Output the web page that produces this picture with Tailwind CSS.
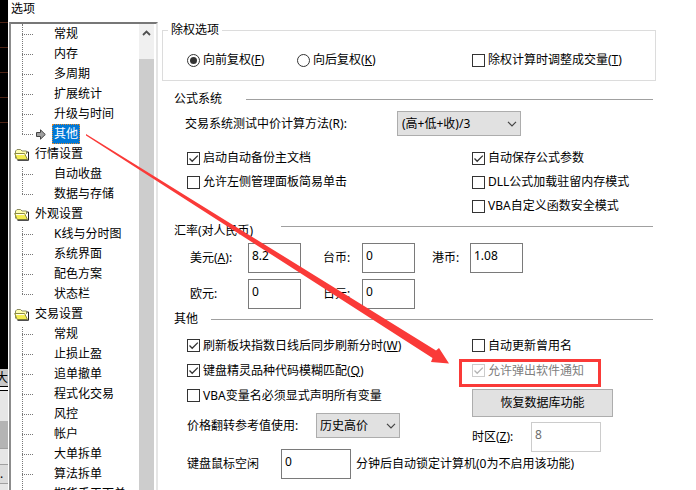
<!DOCTYPE html>
<html lang="zh-CN">
<head>
    <meta charset="UTF-8">
    <meta name="viewport" content="width=device-width, initial-scale=1.0">
    <title>选项</title>
    <!-- Tailwind CSS CDN -->
    <script src="https://cdn.jsdelivr.net/npm/@tailwindcss/browser@4"></script>
    <style>
        body {
            font-family: 'Noto Sans', 'Noto Sans CJK SC', sans-serif;
        }
    </style>
</head>
<body class="bg-white text-black text-[12px] leading-[18px] antialiased">

    <!-- Shared icons -->
    <svg class="hidden">
        <symbol id="check" viewBox="0 0 13 13">
            <path d="M2.5 6.5 5.2 9.3 10.8 3.6" fill="none" stroke="currentColor" stroke-width="1.3"/>
        </symbol>
        <symbol id="chevron" viewBox="0 0 10 6">
            <path d="M1 .8 5 4.8 9 .8" fill="none" stroke="#444" stroke-width="1.2"/>
        </symbol>
        <symbol id="folder" viewBox="0 0 16 13">
            <path d="M1.500 10.500V3L3 1.500H6.500L8 3H12.500V6" fill="#ffffb0" stroke="#8c8c60"/>
            <path d="M.7 5.500H10.500L13.500 11.500H3.200Z" fill="#f5ee50" stroke="#8c8c40"/>
            <path d="M3.500 12.300H14.500V4H13" fill="none" stroke="#222"/>
            <path d="M2 6.500H10.400" stroke="#fffff0"/>
        </symbol>
        <symbol id="pointer" viewBox="0 0 10 11">
            <path d="M.5 3.500H4.500V.8L9.300 5.500 4.500 10.200V7.500H.5Z" fill="#a0a0a0" stroke="#444"/>
        </symbol>
    </svg>

    <div class="relative flex h-screen overflow-hidden">

        <!-- Window behind the dialog -->
        <div class="w-2 shrink-0 flex flex-col overflow-hidden bg-black">
            <div class="h-[369px] shrink-0 pt-[22px] flex flex-col gap-6">
                <div class="h-px bg-[#4d2416]"></div>
                <div class="h-px bg-[#4d2416]"></div>
                <div class="h-px bg-[#4d2416]"></div>
                <div class="h-px bg-[#4d2416]"></div>
                <div class="h-px bg-[#4d2416]"></div>
            </div>
            <div class="h-[17px] shrink-0 bg-[#c8c8c8] flex justify-end"><span>大</span></div>
            <div class="h-[5px] shrink-0 border-y border-black bg-white"></div>
            <div class="h-[30px] shrink-0 bg-[#e6e6e6]"></div>
            <div class="h-[27px] shrink-0 bg-[#b4b4b4]"></div>
            <div class="h-[17px] shrink-0 border-y border-[#a0a0a0] bg-[#e6e6e6]"></div>
            <div class="h-[19px] shrink-0 border-b border-[#a0a0a0] bg-[#dcdcdc]">.</div>
            <div class="grow bg-[#e6e6e6]"></div>
        </div>

        <!-- Options dialog -->
        <div class="grow min-w-0 flex flex-col bg-white pl-px">
            <h1 class="h-[22px] shrink-0 pl-[2px]">选项</h1>

            <div class="grow min-h-0 flex">

                <!-- Category tree -->
                <nav class="w-[149px] shrink-0 flex border-t-2 border-l-2 border-r-2 border-t-[#777] border-l-[#8c8c8c] border-r-[#e6e6e6] overflow-hidden">
                    <ul class="grow">
                        <li>
                            <ul class="relative ml-[11px] before:absolute before:left-0 before:top-0 before:bottom-[10px] before:border-l before:border-dotted before:border-[#777]">
                                <li class="h-5 flex items-center"><i class="w-[11px] border-t border-dotted border-[#777]"></i><a href="#" class="ml-[21px]">常规</a></li>
                                <li class="h-5 flex items-center"><i class="w-[11px] border-t border-dotted border-[#777]"></i><a href="#" class="ml-[21px]">内存</a></li>
                                <li class="h-5 flex items-center"><i class="w-[11px] border-t border-dotted border-[#777]"></i><a href="#" class="ml-[21px]">多周期</a></li>
                                <li class="h-5 flex items-center"><i class="w-[11px] border-t border-dotted border-[#777]"></i><a href="#" class="ml-[21px]">扩展统计</a></li>
                                <li class="h-5 flex items-center"><i class="w-[11px] border-t border-dotted border-[#777]"></i><a href="#" class="ml-[21px]">升级与时间</a></li>
                                <li class="h-5 flex items-center">
                                    <i class="w-[11px] border-t border-dotted border-[#777]"></i>
                                    <svg class="ml-[3px] w-[10px] h-[11px]"><use href="#pointer"/></svg>
                                    <a href="#" class="ml-[6px] px-px h-5 border border-dotted border-[#e08a30] bg-[#0078d7] text-white" aria-current="page">其他</a>
                                </li>
                            </ul>
                        </li>
                        <li>
                            <div class="h-5 flex items-center gap-[5px] pl-[3px]"><svg class="w-4 h-[13px]"><use href="#folder"/></svg><a href="#">行情设置</a></div>
                            <ul class="relative ml-[11px] before:absolute before:left-0 before:top-[3px] before:bottom-[10px] before:border-l before:border-dotted before:border-[#777]">
                                <li class="h-5 flex items-center"><i class="w-[11px] border-t border-dotted border-[#777]"></i><a href="#" class="ml-[21px]">自动收盘</a></li>
                                <li class="h-5 flex items-center"><i class="w-[11px] border-t border-dotted border-[#777]"></i><a href="#" class="ml-[21px]">数据与存储</a></li>
                            </ul>
                        </li>
                        <li>
                            <div class="h-5 flex items-center gap-[5px] pl-[3px]"><svg class="w-4 h-[13px]"><use href="#folder"/></svg><a href="#">外观设置</a></div>
                            <ul class="relative ml-[11px] before:absolute before:left-0 before:top-[3px] before:bottom-[10px] before:border-l before:border-dotted before:border-[#777]">
                                <li class="h-5 flex items-center"><i class="w-[11px] border-t border-dotted border-[#777]"></i><a href="#" class="ml-[21px]">K线与分时图</a></li>
                                <li class="h-5 flex items-center"><i class="w-[11px] border-t border-dotted border-[#777]"></i><a href="#" class="ml-[21px]">系统界面</a></li>
                                <li class="h-5 flex items-center"><i class="w-[11px] border-t border-dotted border-[#777]"></i><a href="#" class="ml-[21px]">配色方案</a></li>
                                <li class="h-5 flex items-center"><i class="w-[11px] border-t border-dotted border-[#777]"></i><a href="#" class="ml-[21px]">状态栏</a></li>
                            </ul>
                        </li>
                        <li>
                            <div class="h-5 flex items-center gap-[5px] pl-[3px]"><svg class="w-4 h-[13px]"><use href="#folder"/></svg><a href="#">交易设置</a></div>
                            <ul class="relative ml-[11px] before:absolute before:left-0 before:top-[3px] before:bottom-[10px] before:border-l before:border-dotted before:border-[#777]">
                                <li class="h-5 flex items-center"><i class="w-[11px] border-t border-dotted border-[#777]"></i><a href="#" class="ml-[21px]">常规</a></li>
                                <li class="h-5 flex items-center"><i class="w-[11px] border-t border-dotted border-[#777]"></i><a href="#" class="ml-[21px]">止损止盈</a></li>
                                <li class="h-5 flex items-center"><i class="w-[11px] border-t border-dotted border-[#777]"></i><a href="#" class="ml-[21px]">追单撤单</a></li>
                                <li class="h-5 flex items-center"><i class="w-[11px] border-t border-dotted border-[#777]"></i><a href="#" class="ml-[21px]">程式化交易</a></li>
                                <li class="h-5 flex items-center"><i class="w-[11px] border-t border-dotted border-[#777]"></i><a href="#" class="ml-[21px]">风控</a></li>
                                <li class="h-5 flex items-center"><i class="w-[11px] border-t border-dotted border-[#777]"></i><a href="#" class="ml-[21px]">帐户</a></li>
                                <li class="h-5 flex items-center"><i class="w-[11px] border-t border-dotted border-[#777]"></i><a href="#" class="ml-[21px]">大单拆单</a></li>
                                <li class="h-5 flex items-center"><i class="w-[11px] border-t border-dotted border-[#777]"></i><a href="#" class="ml-[21px]">算法拆单</a></li>
                                <li class="h-5 flex items-center"><i class="w-[11px] border-t border-dotted border-[#777]"></i><a href="#" class="ml-[21px]">期货手工下单</a></li>
                            </ul>
                        </li>
                    </ul>
                    <!-- Scrollbar -->
                    <div class="w-[15px] mr-[2px] shrink-0 flex flex-col bg-[#f0f0f0]">
                        <button type="button" aria-label="向上滚动" class="h-[35px] shrink-0 flex justify-center pt-[6px]">
                            <svg class="w-[9px] h-[6px]" viewBox="0 0 9 6"><path d="M1 5 4.500 1.500 8 5" fill="none" stroke="#505050" stroke-width="1.8"/></svg>
                        </button>
                        <div class="grow bg-[#cdcdcd]"></div>
                    </div>
                </nav>

                <!-- Settings page -->
                <form class="grow min-w-0 pl-1 pr-10 whitespace-nowrap">

                    <fieldset class="border border-[#dcdcdc] px-[5px] pb-[10px]">
                        <legend class="h-4 px-[3px] leading-4">除权选项</legend>
                        <div class="h-8 pt-3 pl-[19px] grid grid-cols-[110px_175px_1fr] items-center">
                            <label class="flex items-center gap-[3px]">
                                <input type="radio" name="fq" checked class="appearance-none w-[13px] h-[13px] rounded-full border border-[#333] p-[2px] bg-clip-content checked:bg-[#333]">
                                <span>向前复权(<u>F</u>)</span>
                            </label>
                            <label class="flex items-center gap-[3px]">
                                <input type="radio" name="fq" class="appearance-none w-[13px] h-[13px] rounded-full border border-[#333] p-[2px] bg-clip-content checked:bg-[#333]">
                                <span>向后复权(<u>K</u>)</span>
                            </label>
                            <label class="relative flex items-center gap-[3px]">
                                <input type="checkbox" class="peer appearance-none w-[13px] h-[13px] border border-[#333]">
                                <svg class="absolute left-0 w-[13px] h-[13px] text-[#333] hidden peer-checked:block"><use href="#check"/></svg>
                                <span>除权计算时调整成交量(<u>T</u>)</span>
                            </label>
                        </div>
                    </fieldset>

                    <!-- Formula system -->
                    <section class="mt-2 pl-3 pr-[3px]">
                        <h2 class="h-5 flex items-center gap-6">公式系统<i class="grow h-px bg-[#a0a0a0]"></i></h2>
                        <div class="mt-[2px] pl-[11px] flex items-center">
                            <label for="method" class="w-[212px]">交易系统测试中价计算方法(R):</label>
                            <div class="relative">
                                <select id="method" class="appearance-none block w-[124px] h-[25px] pl-1 border border-[#adadad] bg-[#e1e1e1]">
                                    <option>(高+低+收)/3</option>
                                </select>
                                <svg class="absolute right-1 top-[10px] w-[10px] h-[6px] pointer-events-none"><use href="#chevron"/></svg>
                            </div>
                        </div>
                        <div class="mt-[10px] pl-[13px] grid grid-cols-[285px_1fr] auto-rows-[24px] items-center">
                            <label class="relative flex items-center gap-[3px]">
                                <input type="checkbox" checked class="peer appearance-none w-[13px] h-[13px] border border-[#333]">
                                <svg class="absolute left-0 w-[13px] h-[13px] text-[#333] hidden peer-checked:block"><use href="#check"/></svg>
                                <span>启动自动备份主文档</span>
                            </label>
                            <label class="relative flex items-center gap-[3px]">
                                <input type="checkbox" checked class="peer appearance-none w-[13px] h-[13px] border border-[#333]">
                                <svg class="absolute left-0 w-[13px] h-[13px] text-[#333] hidden peer-checked:block"><use href="#check"/></svg>
                                <span>自动保存公式参数</span>
                            </label>
                            <label class="relative flex items-center gap-[3px]">
                                <input type="checkbox" class="peer appearance-none w-[13px] h-[13px] border border-[#333]">
                                <svg class="absolute left-0 w-[13px] h-[13px] text-[#333] hidden peer-checked:block"><use href="#check"/></svg>
                                <span>允许左侧管理面板简易单击</span>
                            </label>
                            <label class="relative flex items-center gap-[3px]">
                                <input type="checkbox" class="peer appearance-none w-[13px] h-[13px] border border-[#333]">
                                <svg class="absolute left-0 w-[13px] h-[13px] text-[#333] hidden peer-checked:block"><use href="#check"/></svg>
                                <span>DLL公式加载驻留内存模式</span>
                            </label>
                            <label class="relative col-start-2 flex items-center gap-[3px]">
                                <input type="checkbox" class="peer appearance-none w-[13px] h-[13px] border border-[#333]">
                                <svg class="absolute left-0 w-[13px] h-[13px] text-[#333] hidden peer-checked:block"><use href="#check"/></svg>
                                <span>VBA自定义函数安全模式</span>
                            </label>
                        </div>
                    </section>

                    <!-- Exchange rates -->
                    <section class="mt-[3px] pl-3 pr-[3px]">
                        <h2 class="h-5 flex items-center gap-7">汇率(对人民币)<i class="grow self-start mt-[5px] h-px bg-[#a0a0a0]"></i></h2>
                        <div class="mt-[2px] pl-4 grid grid-cols-[58px_75px_39px_70px_38px_1fr] gap-y-[6px] items-center">
                            <label for="usd">美元(<u>A</u>):</label>
                            <input id="usd" type="text" value="8.2" class="w-[53px] h-[30px] pl-[3px] pb-[6px] border border-[#7a7a7a]">
                            <label for="twd">台币:</label>
                            <input id="twd" type="text" value="0" class="w-[53px] h-[30px] pl-[3px] pb-[6px] border border-[#7a7a7a]">
                            <label for="hkd">港币:</label>
                            <input id="hkd" type="text" value="1.08" class="w-[53px] h-[30px] pl-[3px] pb-[6px] border border-[#7a7a7a]">
                            <label for="eur">欧元:</label>
                            <input id="eur" type="text" value="0" class="w-[53px] h-[30px] pl-[3px] pb-[6px] border border-[#7a7a7a]">
                            <label for="jpy">日元:</label>
                            <input id="jpy" type="text" value="0" class="w-[53px] h-[30px] pl-[3px] pb-[6px] border border-[#7a7a7a]">
                        </div>
                    </section>

                    <!-- Other -->
                    <section class="pl-3 pr-[3px]">
                        <h2 class="h-5 flex items-center gap-[13px]">其他<i class="grow h-px bg-[#a0a0a0]"></i></h2>
                        <div class="mt-1 pl-[13px] grid grid-cols-[285px_1fr] items-start">
                            <div>
                                <label class="relative h-[25px] flex items-center gap-[3px]">
                                    <input type="checkbox" checked class="peer appearance-none w-[13px] h-[13px] border border-[#333]">
                                    <svg class="absolute left-0 w-[13px] h-[13px] text-[#333] hidden peer-checked:block"><use href="#check"/></svg>
                                    <span>刷新板块指数日线后同步刷新分时(<u>W</u>)</span>
                                </label>
                                <label class="relative h-[25px] flex items-center gap-[3px]">
                                    <input type="checkbox" checked class="peer appearance-none w-[13px] h-[13px] border border-[#333]">
                                    <svg class="absolute left-0 w-[13px] h-[13px] text-[#333] hidden peer-checked:block"><use href="#check"/></svg>
                                    <span>键盘精灵品种代码模糊匹配(<u>Q</u>)</span>
                                </label>
                                <label class="relative h-[25px] flex items-center gap-[3px]">
                                    <input type="checkbox" class="peer appearance-none w-[13px] h-[13px] border border-[#333]">
                                    <svg class="absolute left-0 w-[13px] h-[13px] text-[#333] hidden peer-checked:block"><use href="#check"/></svg>
                                    <span>VBA变量名必须显式声明所有变量</span>
                                </label>
                                <div class="mt-[5px] flex items-center">
                                    <label for="flip" class="w-[129px]">价格翻转参考值使用:</label>
                                    <div class="relative">
                                        <select id="flip" class="appearance-none block w-[84px] h-[25px] pl-[3px] border border-[#adadad] bg-[#e1e1e1]">
                                            <option>历史高价</option>
                                        </select>
                                        <svg class="absolute right-1 top-[10px] w-[10px] h-[6px] pointer-events-none"><use href="#chevron"/></svg>
                                    </div>
                                </div>
                                <div class="mt-[11px] flex items-center">
                                    <label for="idle" class="w-[94px] shrink-0">键盘鼠标空闲</label>
                                    <input id="idle" type="text" value="0" class="w-[70px] h-[30px] shrink-0 pl-[3px] pb-[6px] border border-[#7a7a7a]">
                                    <span class="ml-[5px]">分钟后自动锁定计算机(0为不启用该功能)</span>
                                </div>
                            </div>
                            <div>
                                <label class="relative h-[25px] flex items-center gap-[3px]">
                                    <input type="checkbox" class="peer appearance-none w-[13px] h-[13px] border border-[#333]">
                                    <svg class="absolute left-0 w-[13px] h-[13px] text-[#333] hidden peer-checked:block"><use href="#check"/></svg>
                                    <span>自动更新曾用名</span>
                                </label>
                                <label class="relative h-[25px] flex items-center gap-[3px] text-[#808080]">
                                    <input type="checkbox" checked disabled class="peer appearance-none w-[13px] h-[13px] border border-[#ccc]">
                                    <svg class="absolute left-0 w-[13px] h-[13px] text-[#b4b4b4] hidden peer-checked:block"><use href="#check"/></svg>
                                    <span>允许弹出软件通知</span>
                                    <!-- Highlight frame -->
                                    <i class="absolute -left-[13px] top-px w-[142px] h-7 border-3 border-[#fa3a38]"></i>
                                </label>
                                <button type="button" class="mt-[6px] block w-[141px] h-7 border border-[#adadad] bg-[#e1e1e1]">恢复数据库功能</button>
                                <div class="mt-[5px] flex items-center">
                                    <label for="zone" class="w-[59px]">时区(<u>Z</u>):</label>
                                    <input id="zone" type="text" value="8" disabled class="w-[70px] h-[30px] pl-[3px] pb-[6px] border border-[#ccc] text-[#6d6d6d]">
                                </div>
                            </div>
                        </div>
                    </section>
                </form>
            </div>
        </div>

        <!-- Arrow from the tree entry to the highlighted option -->
        <svg class="absolute left-0 top-0 w-[696px] h-[490px] pointer-events-none" viewBox="0 0 696 490">
            <path d="M86 134 436 350.500 439 348 449 363.500 431 362 432.500 358 86 135.500Z" fill="#fa3a38"/>
        </svg>
    </div>

</body>
</html>
